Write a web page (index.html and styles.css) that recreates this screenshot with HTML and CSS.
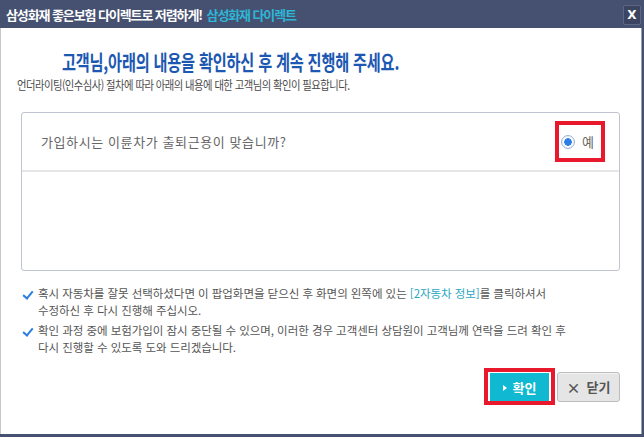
FILE: index.html
```html
<!DOCTYPE html>
<html lang="ko">
  <head>
    <meta charset="UTF-8" />
    <title>삼성화재 다이렉트</title>
    <link rel="stylesheet" href="styles.css">
  </head>
  <body>
    <div class="popup">
      <div class="titlebar">
        <span class="title">삼성화재 좋은보험 다이렉트로 저렴하게! <em>삼성화재 다이렉트</em></span>
        <button class="close">X</button>
      </div>
      <div class="content">
        <h1 class="heading">고객님,아래의 내용을 확인하신 후 계속 진행해 주세요.</h1>
        <p class="sub">언더라이팅(인수심사) 절차에 따라 아래의 내용에 대한 고객님의 확인이 필요합니다.</p>
        <div class="qbox">
          <div class="question">
            <span class="qtext">가입하시는 이륜차가 출퇴근용이 맞습니까?</span>
            <label class="answer mark">
              <span class="radio"></span>
              <span>예</span>
            </label>
          </div>
        </div>
        <ul class="notes">
          <li>혹시 자동차를 잘못 선택하셨다면 이 팝업화면을 닫으신 후 화면의 왼쪽에 있는 <span class="link">[2자동차 정보]</span>를 클릭하셔서<br>수정하신 후 다시 진행해 주십시오.</li>
          <li>확인 과정 중에 보험가입이 잠시 중단될 수 있으며, 이러한 경우 고객센터 상담원이 고객님께 연락을 드려 확인 후<br>다시 진행할 수 있도록 도와 드리겠습니다.</li>
        </ul>
        <div class="actions">
          <span class="mark btn-wrap"><button class="btn ok"><i class="tri"></i>확인</button></span>
          <button class="btn cancel"><i class="x">×</i>닫기</button>
        </div>
      </div>
    </div>
  </body>
</html>
```

FILE: styles.css
```css
html,
body {
  margin: 0;
  padding: 0;
  background-color: #465171;
  font-family: "Noto Sans CJK KR", "Noto Sans", sans-serif;
}

.popup {
  width: 644px;
  height: 437px;
  display: flex;
  flex-direction: column;
}

.titlebar {
  height: 28px;
  display: flex;
  align-items: center;
  justify-content: space-between;
  padding: 0 3px 0 6px;
}

.title {
  color: #fff;
  font-size: 13px;
  font-weight: bold;
  letter-spacing: -1.1px;
}

.title em {
  font-style: normal;
  color: #2db6d6;
  margin-left: 2px;
}

.close {
  width: 18px;
  height: 20px;
  padding: 0;
  margin-top: 2px;
  border: 1px solid #5d6784;
  border-radius: 2px;
  background-color: #3b4562;
  color: #fff;
  font-size: 12px;
  font-weight: bold;
  font-family: "DejaVu Sans", sans-serif;
}

.content {
  flex: 1;
  background-color: #fff;
  border-left: 1px solid #c8c8c8;
  border-right: 1px solid #9aa0b0;
  margin: 0 2px 3px 0;
  padding: 0 21px 0 20px;
}

.heading {
  margin: 21px 0 0 41px;
  font-size: 21px;
  color: #1c58b2;
  letter-spacing: -0.3px;
  line-height: 24px;
  white-space: nowrap;
  transform: scaleX(0.725);
  transform-origin: left center;
}

.sub {
  margin: 3px 0 0 -4px;
  font-size: 12px;
  color: #4a4a4a;
  letter-spacing: -0.6px;
  line-height: 18px;
  white-space: nowrap;
  transform: scaleX(0.86);
  transform-origin: left center;
}

.qbox {
  margin-top: 18px;
  height: 157px;
  border: 1px solid #c0c4d0;
  border-radius: 3px;
}

.question {
  height: 57px;
  border-bottom: 2px solid #e6e6e6;
  display: flex;
  align-items: center;
  justify-content: space-between;
  padding: 0 14px 0 19px;
}

.qtext {
  font-size: 13px;
  color: #666;
  letter-spacing: 0.6px;
}

.answer {
  display: flex;
  align-items: center;
  gap: 7px;
  font-size: 13px;
  color: #666;
  padding: 9px 6px 9px 4px;
}

.mark {
  outline: 4px solid #e8192c;
  outline-offset: -4px;
  box-sizing: border-box;
}

.answer.mark {
  height: 41px;
  width: 50px;
  padding-left: 6px;
}

.radio {
  width: 12px;
  height: 12px;
  border: 1px solid #9ab4d6;
  border-radius: 50%;
  background: radial-gradient(circle, #2a7ee6 0 3.5px, #fff 4px);
  box-shadow: inset 0 0 2px #c5d6ea;
}

.notes {
  list-style: none;
  margin: 14px 0 0 0;
  padding: 0;
  font-size: 11.5px;
  color: #555;
  letter-spacing: -0.05px;
  line-height: 17px;
}

.notes li {
  position: relative;
  padding-left: 17px;
  margin-bottom: 3px;
}

.notes li::before {
  content: "";
  position: absolute;
  left: 4px;
  top: 4px;
  width: 4px;
  height: 8px;
  border: solid #2a7ee0;
  border-width: 0 2px 2px 0;
  transform: rotate(40deg);
}

.link {
  color: #2aa6c0;
}

.actions {
  display: flex;
  justify-content: flex-end;
  align-items: center;
  gap: 2px;
  margin-top: 12px;
}

.btn-wrap {
  display: flex;
  padding: 5px 6px;
  width: 71px;
  height: 37px;
}

.btn {
  height: 29px;
  border: none;
  font-family: "Noto Sans CJK KR", sans-serif;
  font-size: 13px;
  font-weight: bold;
  display: flex;
  align-items: center;
  justify-content: center;
  gap: 6px;
  padding: 0;
}

.ok {
  width: 59px;
  background-color: #10b9d1;
  color: #fff;
}

.tri {
  width: 0;
  height: 0;
  border-left: 4px solid #fff;
  border-top: 3.5px solid transparent;
  border-bottom: 3.5px solid transparent;
}

.cancel {
  width: 63px;
  height: 30px;
  background-color: #e5e5e5;
  border: 1px solid #bcbcbc;
  border-radius: 3px;
  color: #555;
  box-shadow: inset 0 1px 0 #f3f3f3;
}

.x {
  font-style: normal;
  font-size: 14px;
}
```
